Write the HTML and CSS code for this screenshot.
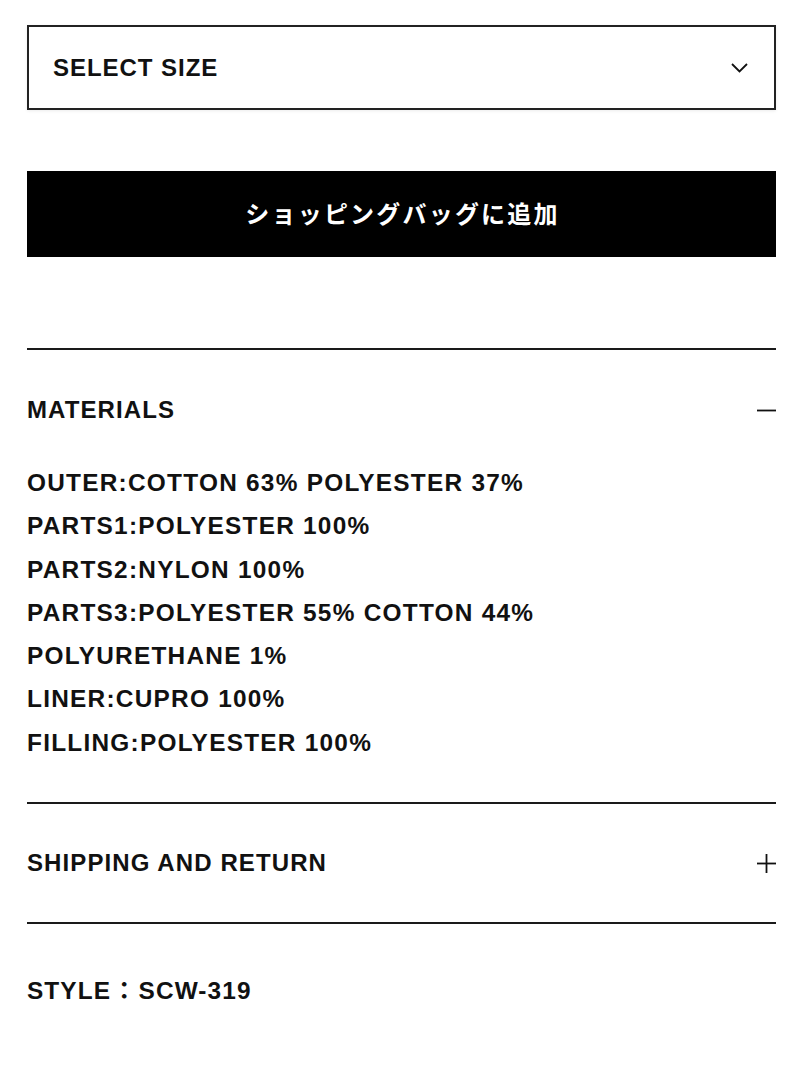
FILE: index.html
```html
<!DOCTYPE html>
<html lang="ja">
<head>
<meta charset="utf-8">
<link rel="stylesheet" href="styles.css">
</head>
<body>
<main class="page">
  <div class="select">
    <span class="select-label">SELECT SIZE</span>
    <svg class="chevron" width="17" height="10" viewBox="0 0 17 10"><polyline points="1,1 8.5,8.5 16,1" fill="none" stroke="#111" stroke-width="1.8"/></svg>
  </div>
  <button class="add-btn">ショッピングバッグに追加</button>

  <section class="acc acc-open">
    <div class="acc-head">
      <span class="acc-title">MATERIALS</span>
      <svg class="acc-icon" width="19" height="19" viewBox="0 0 19 19"><line x1="0" y1="9.5" x2="19" y2="9.5" stroke="#111" stroke-width="1.8"/></svg>
    </div>
    <div class="acc-body">
      <p>OUTER:COTTON 63% POLYESTER 37%</p>
      <p>PARTS1:POLYESTER 100%</p>
      <p>PARTS2:NYLON 100%</p>
      <p>PARTS3:POLYESTER 55% COTTON 44%</p>
      <p>POLYURETHANE 1%</p>
      <p>LINER:CUPRO 100%</p>
      <p>FILLING:POLYESTER 100%</p>
    </div>
  </section>

  <section class="acc acc-closed">
    <div class="acc-head">
      <span class="acc-title">SHIPPING AND RETURN</span>
      <svg class="acc-icon" width="19" height="19" viewBox="0 0 19 19"><line x1="0" y1="9.5" x2="19" y2="9.5" stroke="#111" stroke-width="1.8"/><line x1="9.5" y1="0" x2="9.5" y2="19" stroke="#111" stroke-width="1.8"/></svg>
    </div>
  </section>

  <div class="style-code">STYLE<span class="colon">：</span>SCW-319</div>
</main>
</body>
</html>
```

FILE: styles.css
```css
html, body {
  margin: 0;
  padding: 0;
  background: #fff;
}
body {
  font-family: "Liberation Sans", Arial, "Noto Sans CJK JP", sans-serif;
  color: #111;
  letter-spacing: 0.05em;
}
.page {
  padding: 25px 34px 0 27px;
}
.select {
  box-sizing: border-box;
  height: 85px;
  border: 2px solid #222;
  display: flex;
  align-items: center;
  justify-content: space-between;
  padding: 0 26px 0 24px;
  box-shadow: 0 1px 3px rgba(0,0,0,0.08);
}
.select-label {
  font-size: 24px;
  font-weight: bold;
  line-height: 24px;
  letter-spacing: 0.04em;
}
.chevron {
  display: block;
}
.add-btn {
  display: block;
  width: 100%;
  height: 86px;
  margin-top: 61px;
  border: 0;
  background: #000;
  color: #fff;
  font-family: "Noto Sans CJK JP", sans-serif;
  font-weight: bold;
  font-size: 24px;
  line-height: 24px;
  letter-spacing: 2.2px;
  padding: 0 0 2px 2px;
}
.acc {
  border-top: 2px solid #1a1a1a;
}
.acc-open {
  margin-top: 91px;
  padding-bottom: 38px;
}
.acc-head {
  display: flex;
  align-items: center;
  justify-content: space-between;
  font-size: 24px;
  font-weight: bold;
  line-height: 24px;
  letter-spacing: 1.1px;
}
.acc-open .acc-head {
  padding: 48px 0 39px;
}
.acc-closed .acc-head {
  padding: 47px 0 47px;
  border-bottom: 2px solid #1a1a1a;
}
.acc-icon {
  display: block;
}
.acc-body p {
  margin: 0;
  font-size: 24.4px;
  font-weight: bold;
  line-height: 43.3px;
  letter-spacing: 1.25px;
}
.style-code {
  margin-top: 55px;
  font-size: 24.4px;
  font-weight: bold;
  line-height: 24px;
  letter-spacing: 1.1px;
}
.colon {
  display: inline-block;
  margin: 0 1px;
}
```
